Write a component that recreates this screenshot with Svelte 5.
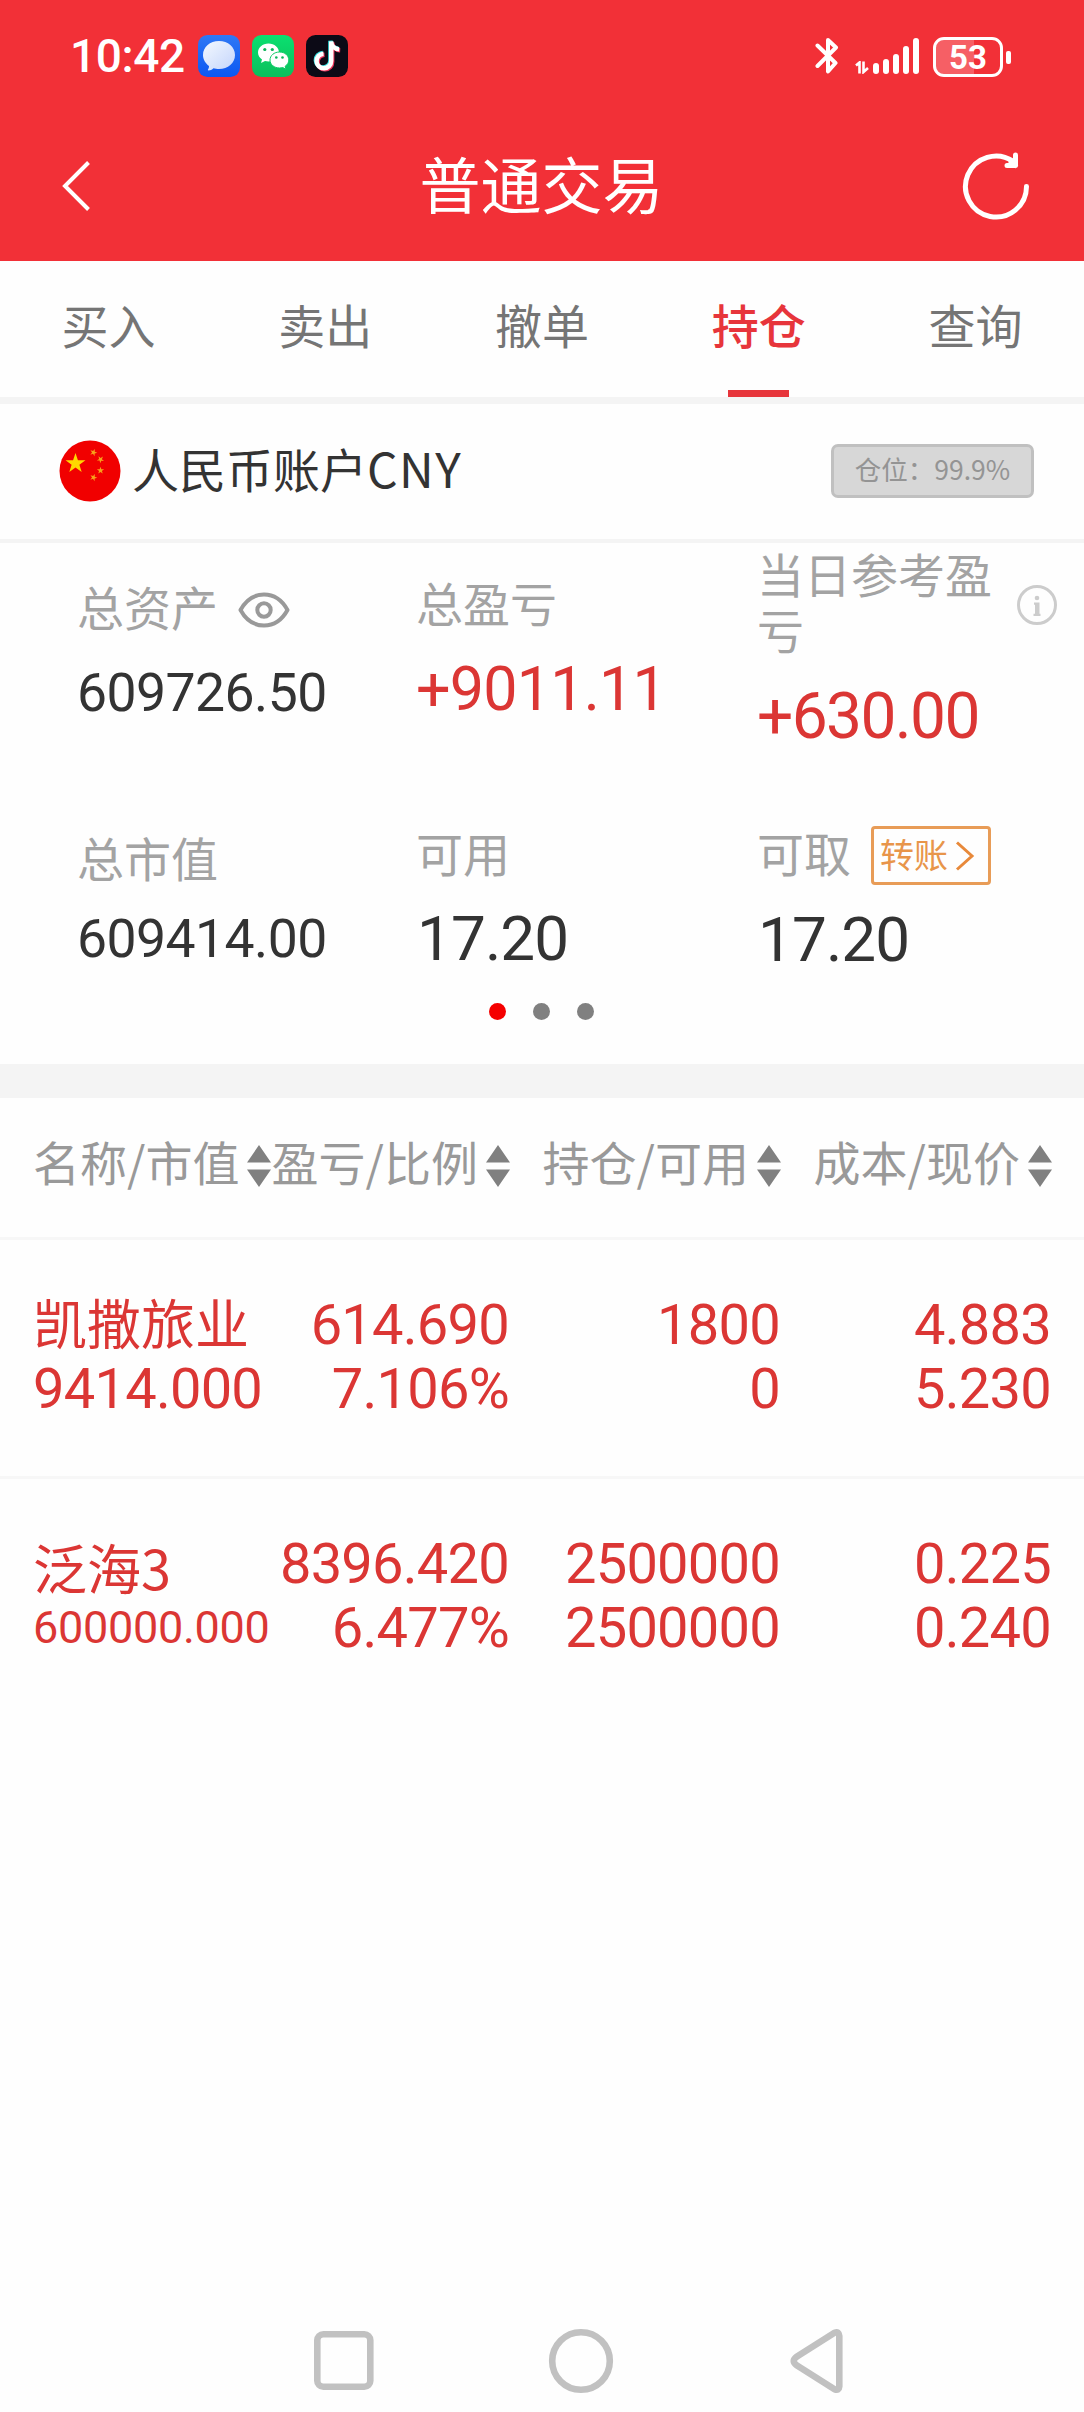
<script>
    const tabs = ['买入', '卖出', '撤单', '持仓', '查询'];
    let activeTab = $state('持仓');

    const columns = ['名称/市值', '盈亏/比例', '持仓/可用', '成本/现价'];

    const holdings = [
        {
            name: '凯撒旅业',
            value: '9414.000',
            profit: '614.690',
            ratio: '7.106%',
            amount: '1800',
            available: '0',
            cost: '4.883',
            price: '5.230',
        },
        {
            name: '泛海3',
            value: '600000.000',
            profit: '8396.420',
            ratio: '6.477%',
            amount: '2500000',
            available: '2500000',
            cost: '0.225',
            price: '0.240',
        },
    ];

    const signal = [11, 15, 20, 28, 36];
</script>

<div class="app">
    <header>
        <div class="status">
            <span class="time">10:42</span>
            <svg class="badge" viewBox="0 0 42 42">
                <defs>
                    <linearGradient id="msg" x1="0" y1="0" x2="0" y2="1">
                        <stop offset="0" stop-color="#2f78f5" />
                        <stop offset="1" stop-color="#0b57f2" />
                    </linearGradient>
                    <linearGradient id="bubble" x1="0" y1="0" x2="1" y2="1">
                        <stop offset="0" stop-color="#f4f9ff" />
                        <stop offset="1" stop-color="#c3d4fb" />
                    </linearGradient>
                </defs>
                <rect width="42" height="42" rx="9.5" fill="url(#msg)" />
                <path d="M21 6c9 0 16 6 16 14s-7 14-16 14c-2 0-4-.3-5.500-.8-1.500 1.300-3.300 2.300-5 2.300-.7 0-.8-.7-.4-1.200.7-.9.9-2 .9-3.300C7.500 28.500 5 24.500 5 20 5 12 12 6 21 6z" fill="url(#bubble)" />
            </svg>
            <svg class="badge" viewBox="0 0 42 42">
                <defs>
                    <linearGradient id="chat" x1="0" y1="0" x2="0" y2="1">
                        <stop offset="0" stop-color="#0be070" />
                        <stop offset="1" stop-color="#0bbf5c" />
                    </linearGradient>
                </defs>
                <rect width="42" height="42" rx="9.5" fill="url(#chat)" />
                <path d="M16.500 8.500C10.500 8.500 6 12.500 6 17.500c0 3 1.500 5.300 4 7l-1 3.500 4-2c1.200.3 2.300.5 3.500.5 6 0 10.500-4 10.500-9s-4.500-9-10.500-9z" fill="#fff" />
                <path d="M27.500 17c-5.300 0-9.500 3.500-9.500 8s4.200 8 9.500 8c1.100 0 2.200-.2 3.200-.5l3.300 1.800-.9-3c2.300-1.500 3.700-3.700 3.700-6.300 0-4.500-4-8-9.300-8z" fill="#fff" stroke="#0bcb64" stroke-width="1" />
                <g fill="#0bb458">
                    <circle cx="12.8" cy="14.5" r="1.6" />
                    <circle cx="20.3" cy="14.5" r="1.6" />
                    <circle cx="24.3" cy="22.5" r="1.3" />
                    <circle cx="30.5" cy="22.5" r="1.3" />
                </g>
            </svg>
            <svg class="badge" viewBox="0 0 42 42">
                <defs>
                    <path id="note" d="M17.500 18.700a7.300 7.300 0 1 0 7.700 7.300V6.500c.3 4.500 3.300 7.600 8 7.900" fill="none" stroke-width="4.4" />
                </defs>
                <rect width="42" height="42" rx="9.5" fill="#0c0a16" />
                <use href="#note" stroke="#35dfe0" transform="translate(-.8 -.8)" />
                <use href="#note" stroke="#f0365c" transform="translate(1 1)" />
                <use href="#note" stroke="#fff" />
            </svg>

            <div class="indicators">
                <svg class="bluetooth" viewBox="0 0 24 38">
                    <path d="M2.500 8.500 20.500 26 13 34.500V21M13 17V3l8 7.500L2.500 29" fill="none" stroke="#fff" stroke-width="4" stroke-linejoin="round" stroke-linecap="round" />
                </svg>
                <svg class="data" viewBox="0 0 14 13">
                    <path d="M1 4.500 4.500 1.500V12.500M8.500.5v10.500L13 7" fill="none" stroke="#fff" stroke-width="2.6" />
                </svg>
                <div class="signal">
                    {#each signal as height}
                        <i style="height: {height}px"></i>
                    {/each}
                </div>
                <div class="battery"><span>53</span></div>
                <i class="nub"></i>
            </div>
        </div>

        <div class="nav">
            <svg class="back" viewBox="0 0 28 50">
                <path d="M26.500 1.500 3 25l23.500 23.500" fill="none" stroke="#fff" stroke-width="4" />
            </svg>
            <h1>普通交易</h1>
            <svg class="refresh" viewBox="0 0 68 70">
                <g fill="none" stroke="#fff" stroke-width="5" stroke-linecap="round" stroke-linejoin="round">
                    <path d="M64.500 35.500A30.500 30.500 0 1 1 51 10.200" />
                    <path d="M53.500 4V14.500H45M49 11l4.500 3.500" />
                </g>
            </svg>
        </div>
    </header>

    <nav class="tabs">
        {#each tabs as tab}
            <button class:active={tab === activeTab} onclick={() => (activeTab = tab)}>{tab}</button>
        {/each}
    </nav>

    <section class="account">
        <svg class="flag" viewBox="0 0 62 62">
            <defs>
                <path id="star" d="M0-10 2.300-3.100h7.200L3.700 1.200 5.900 8.100 0 3.800-5.900 8.100-3.700 1.200-9.500-3.100h7.200z" />
            </defs>
            <circle cx="31" cy="31" r="30.5" fill="#f10000" />
            <use href="#star" transform="translate(16.500 23.500) scale(1.05)" fill="#ffd800" />
            <g fill="#f7a11b">
                <use href="#star" transform="translate(34.500 12.500) rotate(20) scale(.38)" />
                <use href="#star" transform="translate(41.500 19.500) rotate(40) scale(.38)" />
                <use href="#star" transform="translate(41.500 30.500) scale(.38)" />
                <use href="#star" transform="translate(34.500 37.500) rotate(20) scale(.38)" />
            </g>
        </svg>
        <span class="account-name">人民币账户<span class="currency">CNY</span></span>
        <span class="position">仓位：99.9%</span>
    </section>

    <section class="stats">
        <div class="row first">
            <div class="cell">
                <div class="label">
                    总资产
                    <svg class="eye" viewBox="0 0 52 36">
                        <g fill="none" stroke="#999" stroke-width="4">
                            <path d="M2.500 18C8 8 16.500 2.500 26 2.500S44 8 49.500 18C44 28 35.500 33.500 26 33.500S8 28 2.500 18z" stroke-linejoin="round" />
                            <circle cx="26" cy="18" r="6.7" />
                        </g>
                    </svg>
                </div>
                <div class="value">609726.50</div>
            </div>
            <div class="cell">
                <div class="label">总盈亏</div>
                <div class="value up">+9011.11</div>
            </div>
            <div class="cell">
                <div class="label wrap">
                    <span>当日参考盈亏</span>
                    <svg class="info" viewBox="0 0 40 40">
                        <circle cx="20" cy="20" r="18.5" fill="none" stroke="#ccc" stroke-width="3" />
                        <circle cx="20" cy="13" r="2.3" fill="#ccc" />
                        <path d="M17 17.500h5.500v11.200h1V31h-7v-2.300H18v-9h-1z" fill="#ccc" />
                    </svg>
                </div>
                <div class="value up day">+630.00</div>
            </div>
        </div>
        <div class="row second">
            <div class="cell">
                <div class="label">总市值</div>
                <div class="value">609414.00</div>
            </div>
            <div class="cell">
                <div class="label">可用</div>
                <div class="value cash">17.20</div>
            </div>
            <div class="cell">
                <div class="label">
                    可取
                    <button class="transfer">
                        转账
                        <svg viewBox="0 0 20 30">
                            <path d="M2 1.500 17 15 2 28.500" fill="none" stroke="#e8893a" stroke-width="3" />
                        </svg>
                    </button>
                </div>
                <div class="value cash">17.20</div>
            </div>
        </div>
        <div class="dots"><i class="on"></i><i></i><i></i></div>
    </section>

    <section class="holdings">
        <div class="head">
            {#each columns as column}
                <div class="th">
                    {column}
                    <svg viewBox="0 0 24 42">
                        <path d="M12 0 24 17.500H0zM0 24.500h24L12 42z" fill="#808080" />
                    </svg>
                </div>
            {/each}
        </div>
        {#each holdings as item}
            <div class="holding">
                <div class="td title" class:long={item.value.length > 8}>
                    <span class="name">{item.name}</span>
                    <span class="worth">{item.value}</span>
                </div>
                <div class="td"><span>{item.profit}</span><span>{item.ratio}</span></div>
                <div class="td"><span>{item.amount}</span><span>{item.available}</span></div>
                <div class="td"><span>{item.cost}</span><span>{item.price}</span></div>
            </div>
        {/each}
    </section>

    <footer>
        <svg viewBox="0 0 530 66">
            <g fill="none" stroke="#c1c1c1" stroke-width="6.6">
                <rect x="3.3" y="6.3" width="53" height="52.4" rx="6" />
                <circle cx="267" cy="33" r="28.8" />
                <path d="M520.500 4.800 483 28.500q-6.500 4.500 0 9L520.500 61.200q4.500 2 4.800-3V8q-.3-5-4.800-3.200z" stroke-linejoin="round" />
            </g>
        </svg>
    </footer>
</div>

<style>
    :global(body) {
        margin: 0;
        background: #fefefe;
    }

    .app {
        display: flex;
        flex-direction: column;
        width: 1084px;
        height: 2412px;
        overflow: hidden;
        background: #fefefe;
        color: #333;
        font-family: 'Noto Sans CJK SC', 'Noto Sans', sans-serif;
    }

    svg {
        display: block;
        flex: none;
    }

    button {
        border: 0;
        padding: 0;
        background: none;
        font: inherit;
    }

    header {
        height: 261px;
        background: #f23037;
        color: #fff;
    }

    .status {
        display: flex;
        align-items: center;
        height: 112px;
        padding: 0 73px 0 70px;
    }

    .time {
        width: 128px;
        font-family: Roboto, sans-serif;
        font-size: 46px;
        font-weight: 500;
        line-height: 60px;
        letter-spacing: -0.4px;
    }

    .badge {
        width: 42px;
        height: 42px;
        margin-right: 12px;
    }

    .indicators {
        display: flex;
        align-items: flex-end;
        height: 40px;
        margin: 2px 0 0 auto;
    }

    .bluetooth {
        width: 24px;
        height: 38px;
        margin: 0 16px 2px 0;
    }

    .data {
        width: 14px;
        height: 13px;
        margin: 0 4px 3px 0;
    }

    .signal {
        display: flex;
        align-items: flex-end;
        gap: 4px;
        margin: 0 14px 3px 0;
    }

    .signal i {
        width: 6px;
        border-radius: 3px;
        background: #fff;
    }

    .battery {
        box-sizing: border-box;
        width: 70px;
        height: 40px;
        border: 3px solid #fff;
        border-radius: 11px;
        background: linear-gradient(90deg, #f65f65 60%, transparent 60%);
        font-family: Roboto, sans-serif;
        font-size: 33px;
        font-weight: 700;
        line-height: 35px;
        text-align: center;
    }

    .nub {
        width: 5px;
        height: 13px;
        margin: 0 0 13px 3px;
        border-radius: 2px;
        background: #fff;
    }

    .nav {
        display: flex;
        align-items: center;
        justify-content: space-between;
        height: 147px;
        padding: 0 54px 0 62px;
    }

    .back {
        width: 28px;
        height: 50px;
    }

    h1 {
        margin: -6px 0 0 31px;
        font-size: 61px;
        font-weight: 400;
        line-height: 80px;
    }

    .refresh {
        width: 68px;
        height: 70px;
    }

    .tabs {
        display: flex;
        height: 136px;
        border-bottom: 7px solid #f4f4f4;
    }

    .tabs button {
        display: flex;
        flex: 1;
        flex-direction: column;
        align-items: center;
        justify-content: space-between;
        padding-top: 33px;
        color: #757575;
        font-size: 47px;
        line-height: 60px;
    }

    .tabs button::after {
        content: '';
        width: 61px;
        height: 7px;
    }

    .tabs .active {
        color: #e7353b;
        font-weight: 500;
    }

    .tabs .active::after {
        background: #e7353b;
    }

    .account {
        display: flex;
        align-items: center;
        height: 135px;
        padding: 0 50px 0 59px;
        border-bottom: 4px solid #f4f4f4;
    }

    .flag {
        width: 62px;
        height: 62px;
        margin-top: -2px;
    }

    .account-name {
        margin: -9px auto 0 11px;
        font-size: 47px;
        line-height: 60px;
    }

    .currency {
        font-size: 48px;
        letter-spacing: 1.5px;
    }

    .position {
        box-sizing: border-box;
        width: 203px;
        height: 54px;
        margin-top: -1px;
        border: 3px solid #c0c0c0;
        border-radius: 7px;
        background: #d7d7d7;
        color: #949494;
        font-size: 26.5px;
        line-height: 44px;
        text-align: center;
    }

    .stats {
        height: 521px;
    }

    .row {
        display: grid;
        grid-template-columns: 339px 341px 327px;
        padding-left: 77px;
    }

    .first {
        height: 247px;
    }

    .second {
        height: 213px;
    }

    .cell {
        display: flex;
        flex-direction: column;
        gap: 23px;
    }

    .first .cell {
        padding-top: 31px;
    }

    .first .cell:first-child {
        padding-top: 35px;
    }

    .first .cell:last-child {
        gap: 24px;
        padding-top: 2px;
    }

    .second .cell {
        padding-top: 34px;
    }

    .second .cell:first-child {
        gap: 18px;
        padding-top: 39px;
    }

    .second .cell:last-child {
        gap: 24px;
    }

    .label {
        display: flex;
        align-items: center;
        gap: 20px;
        height: 56px;
        color: #a3a3a3;
        font-size: 47px;
        line-height: 56px;
        white-space: nowrap;
    }

    .wrap {
        height: 112px;
        white-space: normal;
    }

    .wrap span {
        width: 240px;
    }

    .eye {
        width: 52px;
        height: 36px;
        margin-top: 7px;
    }

    .info {
        width: 40px;
        height: 40px;
        margin-top: 8px;
    }

    .value {
        height: 72px;
        font-family: Roboto, sans-serif;
        font-size: 53.5px;
        line-height: 72px;
        letter-spacing: -0.55px;
        white-space: nowrap;
    }

    .up {
        color: #db3634;
        font-size: 61px;
        letter-spacing: -0.8px;
    }

    .day {
        font-size: 64px;
        letter-spacing: -1.6px;
    }

    .cash {
        padding-left: 1px;
        font-size: 62px;
        letter-spacing: -0.9px;
    }

    .transfer {
        display: flex;
        align-items: center;
        gap: 7px;
        box-sizing: border-box;
        width: 120px;
        height: 59px;
        margin-top: 7px;
        padding: 0 0 4px 6px;
        border: 3px solid #e89c57;
        border-radius: 4px;
        color: #e8954a;
        font-size: 34px;
        line-height: 48px;
    }

    .transfer svg {
        width: 20px;
        height: 30px;
        margin-top: 5px;
    }

    .dots {
        display: flex;
        justify-content: center;
        gap: 27px;
        padding-right: 2px;
    }

    .dots i {
        width: 17px;
        height: 17px;
        border-radius: 50%;
        background: #808080;
    }

    .dots .on {
        background: #f50000;
    }

    .holdings {
        flex: 1;
        border-top: 34px solid #f4f4f4;
    }

    .head,
    .holding {
        display: grid;
        grid-template-columns: repeat(4, 271px);
    }

    .head {
        height: 139px;
        border-bottom: 3px solid #f7f7f7;
    }

    .th {
        display: flex;
        justify-content: flex-end;
        gap: 8px;
        padding: 33px 32px 0 0;
        color: #999;
        font-size: 47px;
        line-height: 60px;
        white-space: nowrap;
    }

    .th:first-child {
        justify-content: flex-start;
        padding: 33px 0 0 33px;
    }

    .th svg {
        width: 24px;
        height: 42px;
        margin-top: 14px;
    }

    .holding {
        height: 236px;
        border-bottom: 3px solid #f7f7f7;
    }

    .holding:last-child {
        border-bottom: 0;
    }

    .td {
        display: flex;
        flex-direction: column;
        align-items: flex-end;
        padding: 53px 33px 0 0;
        color: #db3634;
        font-family: Roboto, 'Noto Sans CJK SC', sans-serif;
        font-size: 56px;
        line-height: 64px;
        letter-spacing: -0.75px;
    }

    .title {
        align-items: flex-start;
        padding: 50px 0 0 33px;
    }

    .name {
        font-family: 'Noto Sans CJK SC', sans-serif;
        font-size: 54px;
        letter-spacing: 0;
    }

    .worth {
        line-height: 70px;
    }

    .long {
        padding-top: 56px;
    }

    .long .worth {
        font-size: 45px;
        line-height: 58px;
        letter-spacing: -0.3px;
    }

    footer {
        display: flex;
        justify-content: center;
        height: 84px;
    }

    footer svg {
        width: 530px;
        height: 66px;
        margin-left: 74px;
    }
</style>
